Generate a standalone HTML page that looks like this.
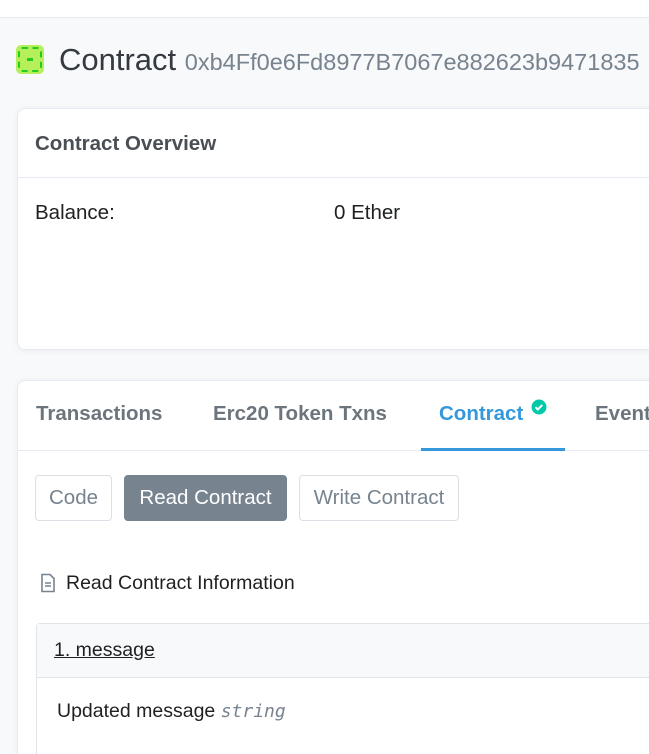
<!DOCTYPE html>
<html><head><style>
*{box-sizing:border-box;margin:0;padding:0}
html{width:649px;height:754px;overflow:hidden}
body{width:649px;height:754px;overflow:hidden;background:#f8f9fa;font-family:"Liberation Sans",Arial,sans-serif;position:relative;color:#1e2022}
.top{position:absolute;left:0;top:0;width:649px;height:18px;background:#fff;border-bottom:1px solid #e7eaf3}
.abs{position:absolute;white-space:nowrap}
.card{position:absolute;background:#fff;border:1px solid #e7eaf3;border-radius:8px;box-shadow:0 1px 6px rgba(140,152,164,.12)}
.btn{position:absolute;top:475px;height:46px;border:1px solid #dcdfe6;border-radius:4px;font-size:20.5px;color:#77838f;line-height:44px;text-align:center;background:#fff}
.tab{font-size:20.5px;font-weight:bold;color:#6c757d;top:402px}
</style></head><body>
<div class="top"></div>
<div class="abs" style="left:16px;top:45px;width:28px;height:29px;background:#b5ef5a;border-radius:5px;overflow:hidden">
<div style="position:absolute;left:2px;top:2px;width:24px;height:25px;border:2px dashed #22cc22;border-radius:4px"></div>
<div style="position:absolute;left:11px;top:13px;width:6px;height:3px;background:#22cc22"></div>
</div>
<div class="abs" style="left:59px;top:42px;font-size:31px;color:#343a40">Contract <span style="font-size:23.5px;color:#77838f">0xb4Ff0e6Fd8977B7067e882623b9471835</span></div>
<div class="card" style="left:17px;top:108px;width:660px;height:242px">
<div style="height:69px;border-bottom:1px solid #e7eaf3"></div>
</div>
<div class="abs" style="left:35px;top:132px;font-size:20.5px;font-weight:bold;color:#4a4f55">Contract Overview</div>
<div class="abs" style="left:35px;top:201px;font-size:20.5px">Balance:</div>
<div class="abs" style="left:334px;top:201px;font-size:20.5px">0 Ether</div>
<div class="card" style="left:17px;top:380px;width:660px;height:374px;border-bottom:none;border-radius:8px 8px 0 0">
<div style="height:70px;border-bottom:1px solid #e7eaf3"></div>
</div>
<div class="abs tab" style="left:36px">Transactions</div>
<div class="abs tab" style="left:213px">Erc20 Token Txns</div>
<div class="abs tab" style="left:439px;color:#3498db">Contract</div>
<svg class="abs" style="left:531px;top:399px" width="16" height="16" viewBox="0 0 16 16"><circle cx="8" cy="8" r="7.5" fill="#00c9a7"/><path d="M4.5 8.2l2.3 2.3 4.5-4.5" stroke="#fff" stroke-width="2" fill="none"/></svg>
<div class="abs tab" style="left:595px">Events</div>
<div class="abs" style="left:421px;top:448px;width:144px;height:3px;background:#3498db"></div>
<div class="btn" style="left:35px;width:77px">Code</div>
<div class="btn" style="left:124px;width:163px;background:#77838f;border-color:#77838f;color:#fff">Read Contract</div>
<div class="btn" style="left:299px;width:160px">Write Contract</div>
<svg class="abs" style="left:40px;top:573px" width="16" height="20" viewBox="0 0 16 20"><path d="M2 1.5h8l4 4V18.5H2z" fill="none" stroke="#77838f" stroke-width="1.6"/><path d="M5 10h6M5 13h6" stroke="#77838f" stroke-width="1.5"/></svg>
<div class="abs" style="left:66px;top:572px;font-size:19.5px">Read Contract Information</div>
<div class="abs" style="left:36px;top:623px;width:620px;height:131px;border:1px solid #e0e3e8;border-bottom:none;border-radius:4px 4px 0 0;background:#fff">
<div style="height:54px;background:#f8f9fa;border-bottom:1px solid #e0e3e8"></div>
</div>
<div class="abs" style="left:54px;top:639px;font-size:19.5px;text-decoration:underline">1. message</div>
<div class="abs" style="left:57px;top:700px;font-size:19.5px">Updated message <i style="font-family:'DejaVu Sans Mono',monospace;font-size:18px;color:#77838f">string</i></div>
</body></html>
